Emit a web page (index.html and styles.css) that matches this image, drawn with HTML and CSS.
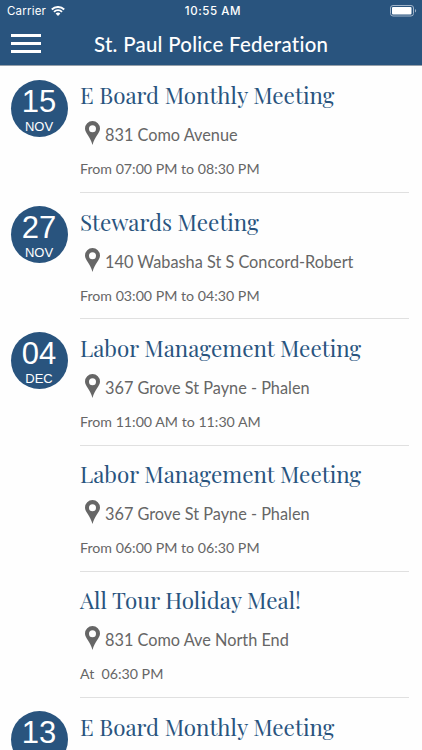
FILE: index.html
```html
<!DOCTYPE html>
<html lang="en">
<head>
  <meta charset="UTF-8" />
  <meta name="viewport" content="width=device-width, initial-scale=1.0" />
  <title>St. Paul Police Federation</title>
  <link rel="stylesheet" href="styles.css">
</head>
<body>
  <svg class="sprite" width="0" height="0">
    <symbol id="pin" viewBox="0 0 15 24">
      <path fill-rule="evenodd" d="M7.5 0A7.5 7.5 0 0 0 0 7.5C0 12.2 5.3 15.5 7.5 24C9.7 15.5 15 12.2 15 7.5A7.5 7.5 0 0 0 7.5 0ZM7.5 4.2A3.5 3.5 0 1 1 7.5 11.2A3.5 3.5 0 1 1 7.5 4.2Z" />
    </symbol>
  </svg>

  <header>
    <div class="status">
      <div class="carrier">
        <span class="carrier-name">Carrier</span>
        <svg class="wifi" width="14" height="10" viewBox="0 0 14 10">
          <path d="M.8 3.5A8.8 8.8 0 0 1 13.2 3.5M3 5.8A5.6 5.6 0 0 1 11 5.8" fill="none" stroke="#fff" stroke-width="1.9" />
          <path d="M4.6 7.6A3.4 3.4 0 0 1 9.4 7.6L7 10Z" fill="#fff" />
        </svg>
      </div>
      <span class="clock">10:55 AM</span>
      <svg class="battery" width="27" height="12" viewBox="0 0 27 12">
        <rect x=".5" y=".5" width="23" height="10.5" rx="2.5" fill="none" stroke="#a0b3c8" />
        <rect x="2" y="2" width="19.5" height="7.5" rx="1" fill="#fff" />
        <path d="M25 4A2 2 0 0 1 25 7.6Z" fill="#a0b3c8" />
      </svg>
    </div>
    <div class="nav">
      <div class="menu"><span></span><span></span><span></span></div>
      <h1>St. Paul Police Federation</h1>
    </div>
  </header>

  <main>
    <section class="event">
      <div class="day"><div class="date"><b>15</b><small>NOV</small></div></div>
      <div class="info">
        <h2>E Board Monthly Meeting</h2>
        <p class="place"><svg><use href="#pin" /></svg><span>831 Como Avenue</span></p>
        <p class="time">From 07:00 PM to 08:30 PM</p>
      </div>
    </section>
    <section class="event">
      <div class="day"><div class="date"><b>27</b><small>NOV</small></div></div>
      <div class="info">
        <h2>Stewards Meeting</h2>
        <p class="place"><svg><use href="#pin" /></svg><span>140 Wabasha St S Concord-Robert</span></p>
        <p class="time">From 03:00 PM to 04:30 PM</p>
      </div>
    </section>
    <section class="event">
      <div class="day"><div class="date"><b>04</b><small>DEC</small></div></div>
      <div class="info">
        <h2>Labor Management Meeting</h2>
        <p class="place"><svg><use href="#pin" /></svg><span>367 Grove St Payne - Phalen</span></p>
        <p class="time">From 11:00 AM to 11:30 AM</p>
      </div>
    </section>
    <section class="event">
      <div class="day"></div>
      <div class="info">
        <h2>Labor Management Meeting</h2>
        <p class="place"><svg><use href="#pin" /></svg><span>367 Grove St Payne - Phalen</span></p>
        <p class="time">From 06:00 PM to 06:30 PM</p>
      </div>
    </section>
    <section class="event">
      <div class="day"></div>
      <div class="info">
        <h2>All Tour Holiday Meal!</h2>
        <p class="place"><svg><use href="#pin" /></svg><span>831 Como Ave North End</span></p>
        <p class="time">At&nbsp; 06:30 PM</p>
      </div>
    </section>
    <section class="event last">
      <div class="day"><div class="date"><b>13</b></div></div>
      <div class="info">
        <h2>E Board Monthly Meeting</h2>
      </div>
    </section>
  </main>
</body>
</html>
```
FILE: styles.css
```css
* {
  box-sizing: border-box;
}
body {
  margin: 0;
  height: 750px;
  overflow: hidden;
  background-color: #fefefe;
  color: #666;
  font-family: Lato, sans-serif;
}
h1, h2, p {
  margin: 0;
  font-weight: 400;
  white-space: nowrap;
}
.sprite {
  display: block;
}
header {
  height: 66px;
  background-color: #29547e;
  border-bottom: 1px solid #96a0aa;
  color: #fff;
}
.status {
  display: grid;
  grid-template-columns: 1fr auto 1fr;
  align-items: center;
  height: 22px;
  padding: 0 5px 0 7px;
  font-family: Inter, sans-serif;
  font-size: 11.5px;
}
.carrier {
  display: flex;
  align-items: center;
  gap: 5px;
}
.carrier-name {
  letter-spacing: 0.2px;
}
.clock {
  margin-left: 2px;
  font-weight: 500;
  letter-spacing: 0.6px;
}
.battery {
  justify-self: end;
}
.nav {
  display: flex;
  align-items: center;
  height: 43px;
  padding-left: 11px;
}
.menu {
  display: flex;
  flex-direction: column;
  gap: 5px;
  width: 30px;
}
.menu span {
  height: 3.3px;
  background-color: #fff;
}
h1 {
  margin-left: 53px;
  font-size: 20.4px;
  font-weight: 500;
  line-height: 44px;
  letter-spacing: 0.29px;
}
main {
  padding-top: 0.75px;
}
.event {
  display: flex;
  height: 126.25px;
  padding-right: 13px;
}
.last {
  height: 52px;
  overflow: hidden;
}
.day {
  width: 80px;
  padding: 13px 0 0 10.5px;
}
.date {
  display: flex;
  flex-direction: column;
  align-items: center;
  width: 57px;
  height: 57px;
  padding-top: 6px;
  border-radius: 50%;
  background-color: #29547e;
  color: #fff;
  font-family: "Liberation Sans", sans-serif;
}
.date b {
  font-size: 31px;
  font-weight: 400;
  line-height: 32px;
}
.date small {
  font-size: 13px;
  line-height: 17px;
}
.info {
  flex: 1;
  padding-top: 13.5px;
  border-bottom: 1.5px solid #e0e0e0;
}
.last .info {
  border-bottom: none;
}
h2 {
  color: #29547e;
  font-family: "Playfair Display", "Liberation Serif", serif;
  font-size: 22.4px;
  line-height: 31px;
}
.place {
  display: flex;
  align-items: flex-start;
  gap: 5px;
  height: 28px;
  margin-top: 9px;
  padding: 1px 0 0 5px;
  font-size: 16.3px;
  line-height: 27px;
}
.place svg {
  width: 15px;
  height: 24px;
  fill: #666;
}
.time {
  margin-top: 11px;
  font-size: 14.2px;
  line-height: 20px;
}
```
